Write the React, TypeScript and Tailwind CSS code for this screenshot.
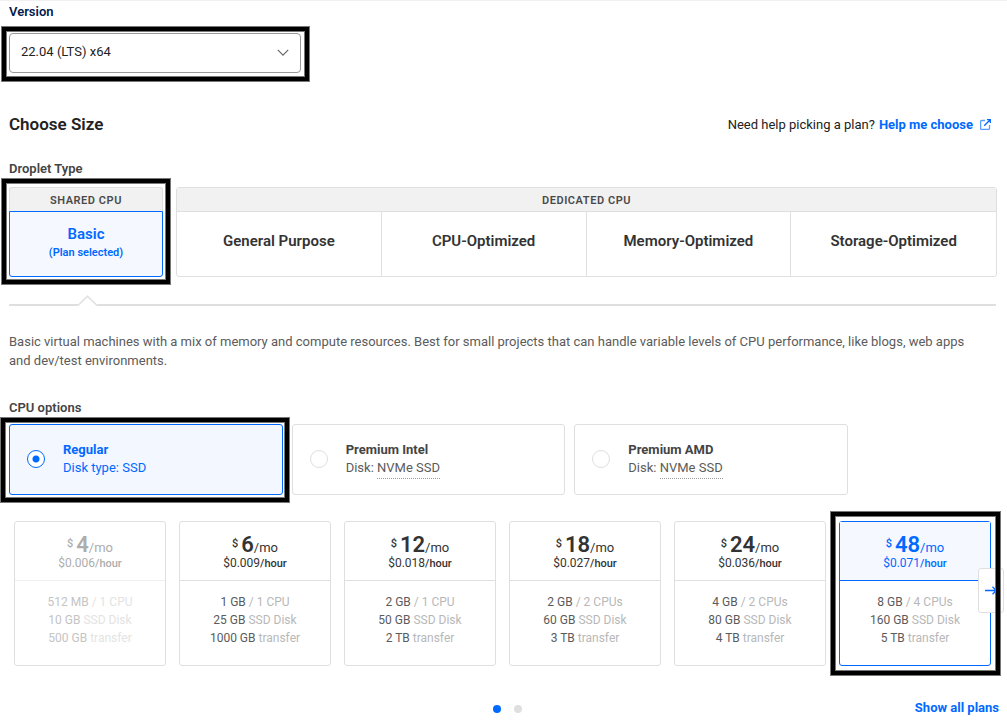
import { useState } from 'react';
import clsx from 'clsx';

const dropletTypes = ['General Purpose', 'CPU-Optimized', 'Memory-Optimized', 'Storage-Optimized'];

const cpuOptions = [
  { id: 'regular', name: 'Regular', label: 'Disk type:', disk: 'SSD' },
  { id: 'intel', name: 'Premium Intel', label: 'Disk:', disk: 'NVMe SSD' },
  { id: 'amd', name: 'Premium AMD', label: 'Disk:', disk: 'NVMe SSD' },
];

const plans = [
  { price: '4', hourly: '$0.006', memory: '512 MB', cpu: '1 CPU', disk: '10 GB', transfer: '500 GB', disabled: true },
  { price: '6', hourly: '$0.009', memory: '1 GB', cpu: '1 CPU', disk: '25 GB', transfer: '1000 GB' },
  { price: '12', hourly: '$0.018', memory: '2 GB', cpu: '1 CPU', disk: '50 GB', transfer: '2 TB' },
  { price: '18', hourly: '$0.027', memory: '2 GB', cpu: '2 CPUs', disk: '60 GB', transfer: '3 TB' },
  { price: '24', hourly: '$0.036', memory: '4 GB', cpu: '2 CPUs', disk: '80 GB', transfer: '4 TB' },
  { price: '48', hourly: '$0.071', memory: '8 GB', cpu: '4 CPUs', disk: '160 GB', transfer: '5 TB' },
];

type Plan = (typeof plans)[number];

function Highlight({ className }: { className: string }) {
  return (
    <div
      aria-hidden="true"
      className={clsx(
        'pointer-events-none absolute z-20 border-4 border-black shadow-[0_0_0_1px_#777,inset_0_0_0_1px_#777]',
        className,
      )}
    />
  );
}

function PlanCard({ plan, selected, onSelect }: { plan: Plan; selected: boolean; onSelect: () => void }) {
  return (
    <button
      type="button"
      disabled={plan.disabled}
      aria-pressed={selected}
      onClick={onSelect}
      className={clsx(
        'flex h-[145px] w-full flex-col rounded-[3px] border bg-white text-center',
        selected ? 'border-[#0069ff]' : 'border-[#dfdfdf]',
      )}
    >
      <span
        className={clsx(
          'flex h-[59px] w-full flex-col items-center border-b pt-[13px]',
          selected && 'border-[#0069ff] bg-[#f5f8ff] text-[#0069ff]',
          plan.disabled && 'border-[#efefef] text-[#adadad]',
          !selected && !plan.disabled && 'border-[#dfdfdf] text-[#333]',
        )}
      >
        <span className="flex items-baseline leading-[19px]">
          <span className="mr-[3px] self-start text-[11px] leading-[18px] font-medium">$</span>
          <span className="text-[22px] font-semibold">{plan.price}</span>
          <span className="text-[13px]">/mo</span>
        </span>
        <span className="text-[12px] leading-[12px]">
          {plan.hourly}
          <span className="text-[11px] font-medium">/hour</span>
        </span>
      </span>
      <span
        className={clsx(
          'w-full pt-[12px] text-[12px] leading-[18px]',
          plan.disabled ? 'text-[#c4c4c4]' : 'text-[#5b5b5b]',
        )}
      >
        <span className="block">
          {plan.memory} <span className={plan.disabled ? 'text-[#e3e3e3]' : 'text-[#b8b8b8]'}>/ {plan.cpu}</span>
        </span>
        <span className="block">
          {plan.disk} <span className={plan.disabled ? 'text-[#e3e3e3]' : 'text-[#b8b8b8]'}>SSD Disk</span>
        </span>
        <span className="block">
          {plan.transfer} <span className={plan.disabled ? 'text-[#e3e3e3]' : 'text-[#b8b8b8]'}>transfer</span>
        </span>
      </span>
    </button>
  );
}

export default function App() {
  const [cpu, setCpu] = useState('regular');
  const [price, setPrice] = useState('48');

  return (
    <main className="overflow-hidden border-t border-[#f1f1f1] bg-white pr-[10px] pl-[9px] font-['Roboto',sans-serif] text-[13px] leading-[19px] text-[#333]">
      <section className="w-[292px] pt-[1px]">
        <label htmlFor="version" className="block font-semibold text-[#031b4e]">
          Version
        </label>
        <div className="relative mt-[12px]">
          <select
            id="version"
            defaultValue="22.04"
            className="h-[40px] w-full appearance-none rounded-[4px] border border-[#999] bg-white px-[11px] pb-[4px] text-[13px] text-[#222]"
          >
            <option value="22.04">22.04 (LTS) x64</option>
          </select>
          <svg
            className="pointer-events-none absolute top-[16px] right-[12px]"
            width="12"
            height="8"
            viewBox="0 0 12 8"
            fill="none"
            stroke="#666"
            strokeWidth="1.2"
          >
            <path d="M0.8 0.8 6 6.2 11.2 0.8" />
          </svg>
          <Highlight className="-top-[6px] -right-[8px] -bottom-[8px] -left-[7px]" />
        </div>
      </section>

      <section className="mt-[39px]">
        <header className="flex items-center justify-between pr-[6px]">
          <h2 className="text-[17px] leading-[24px] font-semibold text-[#222]">Choose Size</h2>
          <p className="flex items-center text-[#222]">
            Need help picking a plan?
            <a href="#help" className="ml-[4px] flex items-center gap-[7px] font-bold text-[#0069ff]">
              Help me choose
              <svg width="11" height="11" viewBox="0 0 11 11" fill="none" stroke="currentColor" strokeWidth="1.3">
                <path d="M5 1.5H1.6a1 1 0 0 0-1 1v6.9a1 1 0 0 0 1 1h6.9a1 1 0 0 0 1-1V6" strokeOpacity="0.65" />
                <path d="M7 0.7h3.3V4M10.2 0.8 4.2 6.8" />
              </svg>
            </a>
          </p>
        </header>

        <h3 className="mt-[23px] font-semibold text-[#444]">Droplet Type</h3>
        <div className="mt-[9px] flex gap-[13px]">
          <div className="relative flex w-[154px] flex-col">
            <div className="h-[24px] rounded-t-[3px] border border-b-0 border-[#dfdfdf] bg-[#f1f1f1] text-center text-[11px] leading-[25px] font-semibold tracking-wider text-[#4a4a4a]">
              SHARED CPU
            </div>
            <button
              type="button"
              aria-pressed="true"
              className="flex h-[66px] flex-col items-center justify-center rounded-b-[3px] border border-[#0069ff] bg-[#f5f8ff] pb-[2px] font-semibold text-[#0069ff]"
            >
              <span className="text-[15px] leading-[20px]">Basic</span>
              <span className="text-[11px] leading-[18px]">(Plan selected)</span>
            </button>
            <Highlight className="-top-[8px] -right-[7px] -bottom-[7px] -left-[7px]" />
          </div>
          <div className="flex-1 rounded-[3px] border border-[#dfdfdf]">
            <div className="h-[24px] border-b border-[#dfdfdf] bg-[#f1f1f1] text-center text-[11px] leading-[25px] font-semibold tracking-wider text-[#4a4a4a]">
              DEDICATED CPU
            </div>
            <div className="grid h-[64px] grid-cols-4 divide-x divide-[#dfdfdf]">
              {dropletTypes.map((name) => (
                <button key={name} type="button" className="pb-[6px] text-[15px] font-semibold text-[#333]">
                  {name}
                </button>
              ))}
            </div>
          </div>
        </div>

        <div className="relative mt-[27px] mr-[1px] h-[2px] bg-[#dfdfdf]">
          <svg className="absolute bottom-0 left-[68px]" width="21" height="11" viewBox="0 0 21 11">
            <path d="M1 11h19v-2L10.500 0.500 1 9z" fill="#fff" />
            <path d="M0 10h1.500L10.500 1.200 19.500 10H21" fill="none" stroke="#e2e2e2" strokeWidth="1.600" />
          </svg>
        </div>

        <p className="mt-[26px] pr-4 leading-[19px] text-[#5b5b5b]">
          Basic virtual machines with a mix of memory and compute resources. Best for small projects that can handle
          variable levels of CPU performance, like blogs, web apps and dev/test environments.
        </p>
      </section>

      <fieldset className="mt-[28px]">
        <legend className="font-semibold text-[#444]">CPU options</legend>
        <div className="mt-[7px] grid max-w-[839px] grid-cols-3 gap-[9px]">
          {cpuOptions.map((option) => {
            const active = option.id === cpu;
            return (
              <div key={option.id} className="relative">
                <label
                  className={clsx(
                    'flex h-[71px] items-center rounded-[3px] border pb-[1px] pl-[17px]',
                    active ? 'border-[#0069ff] bg-[#f3f7ff] text-[#0069ff]' : 'border-[#dfdfdf] bg-white',
                  )}
                >
                  <input
                    type="radio"
                    name="cpu"
                    checked={active}
                    onChange={() => setCpu(option.id)}
                    className="size-[18px] shrink-0 appearance-none rounded-full border border-[#dfdfdf] bg-white checked:border-[#0069ff] checked:bg-[radial-gradient(circle,#0069ff_3px,#fff_4px)]"
                  />
                  <span className={clsx('ml-[18px] leading-[18px]', !active && 'text-[#5b5b5b]')}>
                    <span className={clsx('block font-bold', !active && 'text-[#444]')}>{option.name}</span>
                    {option.label}{' '}
                    <span className={clsx(!active && 'border-b border-dotted border-[#999] pb-[3px]')}>
                      {option.disk}
                    </span>
                  </span>
                </label>
                {option.id === 'regular' && (
                  <Highlight className="-top-[6px] -right-[6px] -bottom-[7px] -left-[8px]" />
                )}
              </div>
            );
          })}
        </div>
      </fieldset>

      <section className="relative mt-[26px]">
        <div className="grid grid-cols-6 gap-[13px] pr-[6px] pl-[5px]">
          {plans.map((plan) => (
            <div key={plan.price} className="relative">
              <PlanCard plan={plan} selected={plan.price === price} onSelect={() => setPrice(plan.price)} />
              {plan.price === '48' && (
                <Highlight className="-top-[9px] -right-[9px] -bottom-[9px] -left-[8px]" />
              )}
            </div>
          ))}
        </div>
        <button
          type="button"
          aria-label="Next plans"
          className="absolute top-[47px] -right-[7px] z-10 flex h-[45px] w-[26px] items-center rounded-[3px] border border-[#dfdfdf] bg-white pl-[6px] text-[#0069ff]"
        >
          <svg width="13" height="9" viewBox="0 0 13 9" fill="none" stroke="currentColor" strokeWidth="1.300">
            <path d="M0 4.500h11M7.500 0.800 11.200 4.500 7.500 8.200" />
          </svg>
        </button>
      </section>

      <footer className="-mr-[2px] mt-[32px] grid grid-cols-[1fr_auto_1fr] items-center pl-[7px]">
        <div className="col-start-2 flex items-center gap-[13px] pt-[2px]">
          <button type="button" aria-label="Page 1" className="size-[8px] rounded-full bg-[#0069ff]" />
          <button type="button" aria-label="Page 2" className="size-[8px] rounded-full bg-[#dfdfdf]" />
        </div>
        <a href="#plans" className="justify-self-end font-bold text-[#0069ff]">
          Show all plans
        </a>
      </footer>
    </main>
  );
}
